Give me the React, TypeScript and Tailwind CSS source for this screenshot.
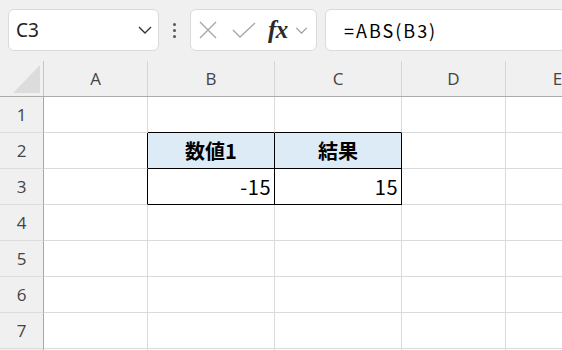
import { ReactNode } from 'react'

const cols = [
  { key: 'A', w: 'w-[104px]' },
  { key: 'B', w: 'w-[127px]' },
  { key: 'C', w: 'w-[127px]' },
  { key: 'D', w: 'w-[104px]' },
  { key: 'E', w: 'w-[104px]' },
]

type Cell = { text?: ReactNode; className?: string }

// row -> column -> cell overrides
const sheet: Record<number, Record<string, Cell>> = {
  1: {
    B: { className: 'border-b-black' },
    C: { className: 'border-b-black' },
  },
  2: {
    A: { className: 'border-r-black' },
    B: { text: '数値1', className: 'border-r-black border-b-black bg-[#ddebf7] justify-center font-bold' },
    C: { text: '結果', className: 'border-r-black border-b-black bg-[#ddebf7] justify-center font-bold' },
  },
  3: {
    A: { className: 'border-r-black' },
    B: { text: '-15', className: 'border-r-black border-b-black justify-end pr-[3px] tracking-[0.5px]' },
    C: { text: '15', className: 'border-r-black border-b-black justify-end pr-[3px] tracking-[0.5px]' },
  },
}

// row 8 is only a sliver at the bottom edge, so it gets no label
const rows = [1, 2, 3, 4, 5, 6, 7, 8]

function Chevron({ className }: { className?: string }) {
  return (
    <svg viewBox="0 0 14 8" className={className} fill="none" stroke="currentColor" strokeWidth="1.4">
      <path d="M1 1l6 6 6-6" />
    </svg>
  )
}

export default function App() {
  return (
    <div className="w-[562px] h-[350px] overflow-hidden bg-white font-['Open_Sans',sans-serif]">
      {/* Formula bar */}
      <div className="h-[61px] bg-[#f0f0f0] flex items-start pt-[9px] pl-2 overflow-hidden">
        <div className="w-[151px] h-[42px] shrink-0 bg-white border border-[#dadada] rounded-md flex items-center pl-[7px] pr-[6px]">
          <span className="text-[19px] text-[#222] font-['Noto_Sans',sans-serif] leading-none">C3</span>
          <Chevron className="ml-auto w-[14px] h-[8px] text-[#333]" />
        </div>
        <div className="w-[31px] h-[42px] shrink-0 flex flex-col items-center justify-center gap-[3px]">
          <span className="w-[3px] h-[3px] rounded-full bg-[#555]" />
          <span className="w-[3px] h-[3px] rounded-full bg-[#555]" />
          <span className="w-[3px] h-[3px] rounded-full bg-[#555]" />
        </div>
        <div className="w-[127px] h-[42px] shrink-0 bg-white border border-[#dadada] rounded-md flex items-center pl-[8px]">
          <svg viewBox="0 0 18 18" className="w-[18px] h-[18px] text-[#a6a6a6]" fill="none" stroke="currentColor" strokeWidth="1.3">
            <path d="M1 1l16 16M17 1L1 17" />
          </svg>
          <svg viewBox="0 0 24 16" className="ml-[15px] w-[24px] h-[16px] text-[#a6a6a6]" fill="none" stroke="currentColor" strokeWidth="1.3">
            <path d="M1 8l7 7L23 1" />
          </svg>
          <span className="ml-[12px] text-[25px] italic font-bold font-['Liberation_Serif',serif] text-[#2a2a2a] leading-none -mt-[2px] tracking-[-0.5px]">fx</span>
          <Chevron className="ml-[6px] w-[15px] h-[7px] text-[#9a9a9a]" />
        </div>
        <div className="ml-2 w-[260px] h-[42px] shrink-0 bg-white border border-[#dadada] rounded-md flex items-center pl-[18px]">
          <span className="text-[18px] text-black font-['Noto_Sans_CJK_JP',sans-serif] tracking-[2px] leading-none">=ABS(B3)</span>
        </div>
      </div>

      {/* Column header */}
      <div className="flex h-[36px] bg-[#f0f0f0] border-b border-b-[#ababab]">
        <div className="w-[44px] shrink-0 border-r border-r-[#c4c4c4] relative">
          <svg viewBox="0 0 27 28" className="absolute left-[13px] top-[4px] w-[27px] h-[28px]">
            <polygon points="27,0 27,28 0,28" fill="#dcdcdc" />
          </svg>
        </div>
        {cols.map((c) => (
          <div
            key={c.key}
            className={`${c.w} shrink-0 border-r border-r-[#d6d6d6] flex items-center justify-center text-[17px] text-[#444]`}
          >
            {c.key}
          </div>
        ))}
      </div>

      {/* Rows */}
      {rows.map((r) => (
        <div key={r} className="flex h-[36px]">
          <div className="w-[44px] shrink-0 bg-[#f0f0f0] border-r border-r-[#a8a8a8] border-b border-b-[#dcdcdc] flex items-center justify-center text-[17px] text-[#444]">
            {r < 8 ? r : null}
          </div>
          {cols.map((c) => {
            const cell = sheet[r]?.[c.key]
            return (
              <div
                key={c.key}
                className={`${c.w} shrink-0 border-r border-b border-[#dadada] flex items-center text-[20px] text-black font-['Noto_Sans_CJK_JP',sans-serif] ${cell?.className ?? ''}`}
              >
                {cell?.text}
              </div>
            )
          })}
        </div>
      ))}
    </div>
  )
}
